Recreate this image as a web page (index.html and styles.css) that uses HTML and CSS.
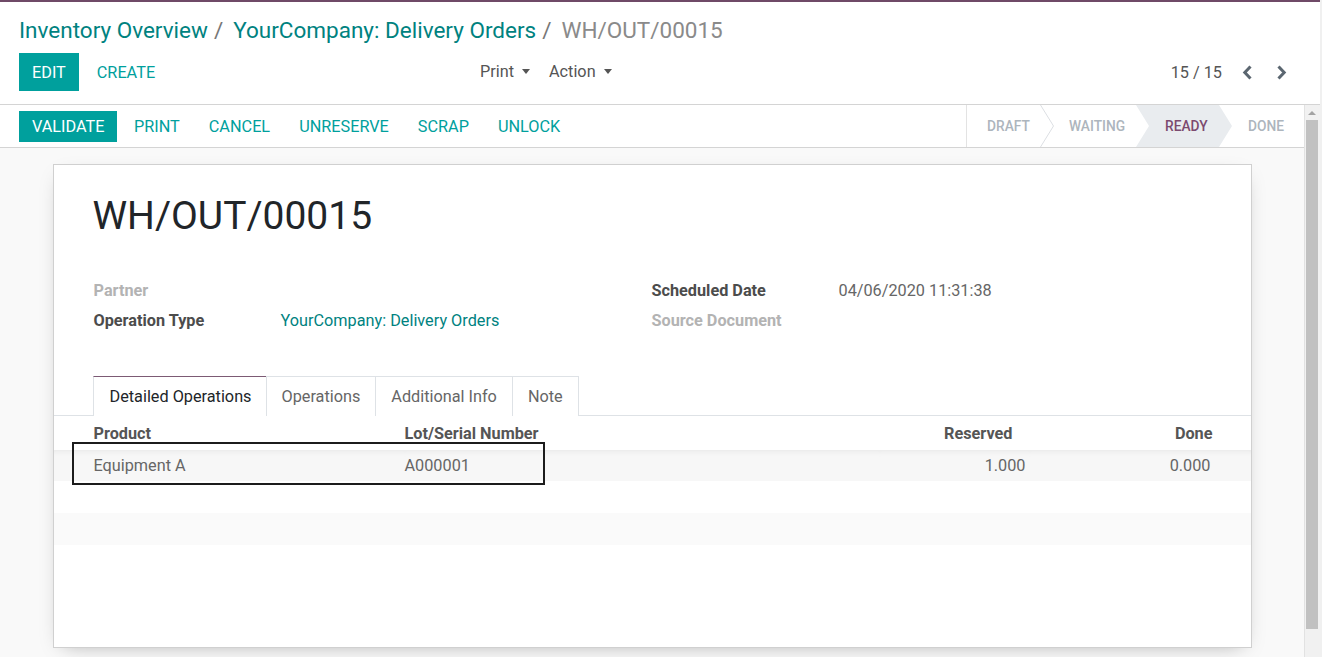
FILE: index.html
```html
<!DOCTYPE html>
<html>
<head>
<meta charset="utf-8">
<link rel="stylesheet" href="styles.css">
</head>
<body>
<div class="app">
  <header class="cp">
    <ol class="breadcrumb">
      <li class="bc-link">Inventory Overview</li>
      <li class="bc-sep">/</li>
      <li class="bc-link">YourCompany: Delivery Orders</li>
      <li class="bc-sep">/</li>
      <li class="bc-active">WH/OUT/00015</li>
    </ol>
    <div class="cp-bottom">
      <div class="cp-buttons">
        <button class="btn btn-primary">Edit</button>
        <button class="btn btn-link">Create</button>
      </div>
      <div class="cp-sidebar">
        <span class="dd">Print<i class="caret"></i></span>
        <span class="dd">Action<i class="caret"></i></span>
      </div>
      <div class="pager">
        <span class="pager-value">15 / 15</span>
        <span class="pager-btn"><svg width="11" height="15" viewBox="0 0 11 15"><path d="M8.5 1.5 L2.8 7.5 L8.5 13.5" fill="none" stroke="#5b6670" stroke-width="3"/></svg></span>
        <span class="pager-btn"><svg width="11" height="15" viewBox="0 0 11 15"><path d="M2.5 1.5 L8.2 7.5 L2.5 13.5" fill="none" stroke="#5b6670" stroke-width="3"/></svg></span>
      </div>
    </div>
  </header>
  <div class="main">
    <div class="content">
      <div class="statusbar">
        <div class="sb-buttons">
          <button class="btn btn-primary btn-sm">Validate</button>
          <button class="btn btn-link btn-sm">Print</button>
          <button class="btn btn-link btn-sm">Cancel</button>
          <button class="btn btn-link btn-sm">Unreserve</button>
          <button class="btn btn-link btn-sm">Scrap</button>
          <button class="btn btn-link btn-sm">Unlock</button>
        </div>
        <div class="steps">
          <span class="step step-draft">Draft</span>
          <svg class="step-sep" width="14" height="42" viewBox="0 0 14 42"><path d="M0.5 0 L13.5 21 L0.5 42" fill="none" stroke="#dcdfe3" stroke-width="1"/></svg>
          <span class="step step-waiting">Waiting</span>
          <span class="step step-ready">Ready</span>
          <span class="step step-done">Done</span>
        </div>
      </div>
      <div class="sheet-bg">
        <div class="sheet">
          <h1 class="title">WH/OUT/00015</h1>
          <div class="groups">
            <div class="group">
              <div class="field-row"><span class="label label-empty">Partner</span><span class="value"></span></div>
              <div class="field-row"><span class="label">Operation Type</span><span class="value value-link">YourCompany: Delivery Orders</span></div>
            </div>
            <div class="group">
              <div class="field-row"><span class="label">Scheduled Date</span><span class="value">04/06/2020 11:31:38</span></div>
              <div class="field-row"><span class="label label-empty">Source Document</span><span class="value"></span></div>
            </div>
          </div>
          <ul class="tabs">
            <li class="tab tab-active">Detailed Operations</li>
            <li class="tab">Operations</li>
            <li class="tab">Additional Info</li>
            <li class="tab">Note</li>
          </ul>
          <table class="list">
            <colgroup>
              <col class="c1"><col class="c2"><col class="c3"><col class="c4">
            </colgroup>
            <thead>
              <tr><th class="th-first">Product</th><th>Lot/Serial Number</th><th class="num th-res">Reserved</th><th class="num th-done">Done</th></tr>
            </thead>
            <tbody>
              <tr class="row-data"><td class="td-first">Equipment A</td><td>A000001</td><td class="num td-res">1.000</td><td class="num td-done">0.000</td></tr>
              <tr class="row-empty"><td></td><td></td><td></td><td></td></tr>
              <tr class="row-empty row-striped"><td></td><td></td><td></td><td></td></tr>
              <tr class="row-empty"><td></td><td></td><td></td><td></td></tr>
            </tbody>
          </table>
          <div class="annotation"></div>
        </div>
      </div>
    </div>
    <div class="scrollbar">
      <div class="sb-up"></div>
      <div class="sb-thumb"></div>
    </div>
  </div>
</div>
</body>
</html>
```

FILE: styles.css
```css
* { box-sizing: border-box; }
html, body { margin: 0; padding: 0; }
body {
  width: 1322px;
  height: 657px;
  overflow: hidden;
  font-family: Roboto, "Liberation Sans", sans-serif;
  color: #4c4c4c;
  background: #f0f0f0;
}
.app {
  width: 1320px;
  height: 657px;
  display: flex;
  flex-direction: column;
  background: #fff;
}
.cp {
  border-top: 2px solid #6f4a67;
  border-bottom: 1px solid #d4d4d4;
  height: 105px;
  padding: 15px 33px 0 19px;
  background: #fff;
}
.breadcrumb {
  list-style: none;
  margin: 0;
  padding: 0;
  display: flex;
  align-items: center;
  font-size: 22.5px;
  line-height: 26px;
  height: 26px;
}
.bc-link { color: #00827f; }
.bc-sep { color: #777; margin: 0 10px 0 6px; }
.bc-active { color: #8a8a8a; }
.cp-bottom {
  margin-top: 10px;
  display: flex;
  align-items: center;
  height: 38px;
}
.cp-buttons {
  width: 461px;
  display: flex;
  align-items: center;
}
.btn {
  font-family: inherit;
  border: 0;
  background: none;
  text-transform: uppercase;
  font-size: 16.25px;
  cursor: pointer;
  padding: 0;
}
.btn-primary {
  background: #00a09d;
  color: #fff;
  height: 38px;
  padding: 0 13px;
}
.btn-link {
  color: #00a09d;
  height: 38px;
  padding: 0 18px;
}
.cp-sidebar {
  display: flex;
  align-items: center;
  gap: 19px;
  margin-top: -1px;
}
.dd {
  font-size: 16.25px;
  color: #555;
  display: inline-flex;
  align-items: center;
}
.caret {
  display: inline-block;
  width: 0;
  height: 0;
  border-top: 5px solid #555;
  border-left: 4.5px solid transparent;
  border-right: 4.5px solid transparent;
  margin-left: 8px;
}
.pager {
  margin-left: auto;
  display: flex;
  align-items: center;
}
.pager-value {
  font-size: 16.25px;
  color: #555;
  margin-right: 20px;
}
.pager-btn {
  display: inline-flex;
  width: 11px;
  height: 15px;
}
.pager-btn + .pager-btn { margin-left: 23px; }

.main {
  flex: 1;
  display: flex;
  min-height: 0;
}
.content {
  flex: 1;
  background: #f9f9f9;
  display: flex;
  flex-direction: column;
  min-width: 0;
}
.statusbar {
  height: 43px;
  background: #fff;
  border-bottom: 1px solid #d4d4d4;
  display: flex;
  align-items: stretch;
  justify-content: space-between;
  flex: none;
}
.sb-buttons {
  display: flex;
  align-items: center;
  padding-left: 19px;
}
.btn-sm { height: 31px; font-size: 16.25px; }
.sb-buttons .btn-primary { padding: 0 12px 0 13px; margin-right: 3px; }
.sb-buttons .btn-link { padding: 0 14.5px; }
.steps {
  display: flex;
  align-items: stretch;
  border-left: 1px solid #e3e3e3;
  height: 42px;
}
.step {
  display: flex;
  align-items: center;
  text-transform: uppercase;
  font-size: 13.75px;
  font-weight: 500;
  color: #adb5bd;
  flex: none;
}
.step-sep { flex: none; }
.step-draft { width: 73px; padding-left: 20px; }
.step-waiting { width: 82px; padding-left: 15px; }
.step-ready {
  width: 96px;
  padding-left: 29px;
  background: #e9ecef;
  color: #7c4a6f;
  clip-path: polygon(0 0, 83px 0, 96px 50%, 83px 100%, 0 100%, 13px 50%);
}
.step-done { width: 72px; padding-left: 16px; }

.sheet-bg {
  flex: 1;
  padding-top: 16px;
  min-height: 0;
}
.sheet {
  position: relative;
  width: 1199px;
  height: 484px;
  margin: 0 auto;
  background: #fff;
  border: 1px solid #d0d0d0;
  box-shadow: 0 6px 20px -10px rgba(0,0,0,0.35);
  padding: 28px 39px 0 39px;
}
.title {
  margin: 0;
  font-size: 39px;
  font-weight: 400;
  line-height: 46px;
  color: #212529;
}
.groups {
  margin-top: 36px;
  display: grid;
  grid-template-columns: 558px 1fr;
  padding-left: 1px;
}
.field-row {
  display: flex;
  align-items: center;
  height: 30px;
  font-size: 16.25px;
}
.label {
  width: 187px;
  font-weight: 700;
  color: #4c4c4c;
}
.label-empty { color: #b3b3b3; }
.value { color: #666; }
.value-link { color: #00827f; }

.tabs {
  list-style: none;
  margin: 41px -39px 0 -39px;
  padding: 0 0 0 39px;
  display: flex;
  border-bottom: 1px solid #dee2e6;
  height: 40px;
}
.tab {
  height: 40px;
  padding: 0 15px;
  display: flex;
  align-items: center;
  font-size: 16.25px;
  color: #666;
  border: 1px solid #dee2e6;
  border-bottom: 0;
  margin-right: -1px;
  background: #fff;
}
.tab-active {
  color: #212529;
  border-top-color: #7c5a74;
  margin-bottom: -1px;
  padding: 0 14px 0 16px;
}
.list {
  margin: 0 -39px;
  width: 1197px;
  border-collapse: collapse;
  font-size: 16.25px;
}
.c1 { width: 351px; }
.c2 { width: 475px; }
.c3 { width: 150px; }
.c4 { width: 221px; }
.list th {
  text-align: left;
  font-weight: 700;
  color: #555;
  height: 34px;
  padding: 0;
}
.list td {
  height: 32px;
  padding: 0;
  color: #666;
}
.th-first, .td-first { padding-left: 40px !important; }
.num { text-align: right !important; }
.th-res { padding-right: 17px !important; }
.td-res { padding-right: 4px !important; }
.th-done { padding-right: 38px !important; }
.td-done { padding-right: 40px !important; }
.row-data td {
  background: #f7f7f7;
  box-shadow: inset 0 7px 6px -6px rgba(0,0,0,0.07);
  height: 31px;
}
.row-striped td { background: #fafafa; }

.annotation {
  position: absolute;
  left: 18px;
  top: 277px;
  width: 473px;
  height: 43px;
  border: 2px solid #1c1c1c;
}

.scrollbar {
  width: 16px;
  flex: none;
  background: #f1f1f1;
  border-left: 1px solid #e2e2e2;
  padding: 0 2px 0 1px;
}
.sb-up {
  margin: 6px auto 0;
  width: 0;
  height: 0;
  border-bottom: 4px solid #a3a3a3;
  border-left: 4px solid transparent;
  border-right: 4px solid transparent;
}
.sb-thumb {
  margin-top: 5px;
  height: 509px;
  background: #c1c1c1;
}
```
